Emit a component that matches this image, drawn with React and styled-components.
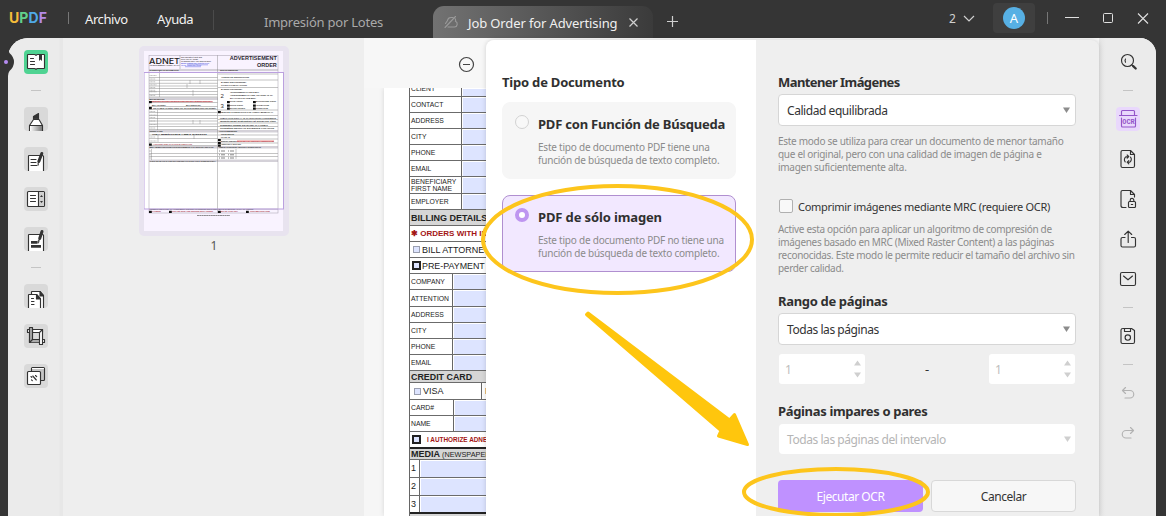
import React from 'react'
import styled, { createGlobalStyle, css } from 'styled-components'

const GlobalStyle = createGlobalStyle`
  * { box-sizing: border-box; }
  body {
    margin: 0;
    width: 1166px;
    height: 516px;
    overflow: hidden;
    background: #353535;
    font-family: "Noto Sans", sans-serif;
    color: #333;
  }
`

const Window = styled.div`
  position: relative;
  width: 1166px;
  height: 516px;
  overflow: hidden;
  background: #353535;
`

/* ---------- title bar ---------- */

const TitleBar = styled.header`
  display: flex;
  height: 38px;
  color: #f2f2f2;
`

const Brand = styled.div`
  width: 68px;
  padding-left: 9px;
  font: 700 14px/36px Inter, sans-serif;
  letter-spacing: 0.1px;
`

const Letter = styled.span`
  color: ${props => props.tint};
`

const BarDivider = styled.span`
  width: 1px;
  height: ${props => props.size || 12}px;
  margin-top: ${props => props.top || 12}px;
  background: ${props => props.tint || '#777'};
`

const MenuItem = styled.span`
  margin-left: ${props => props.gap}px;
  width: ${props => props.wide}px;
  font-size: 13px;
  line-height: 39px;
  letter-spacing: -0.4px;
  white-space: nowrap;
`

const Tab = styled.div`
  display: flex;
  align-items: center;
  height: 32px;
  margin-top: 6px;
  font-size: 13px;
  letter-spacing: ${props => props.active ? '-0.12px' : '-0.23px'};
  white-space: nowrap;
  color: ${props => props.active ? '#f0f0f0' : '#a9a9a9'};
  ${props => props.active ? css`
    width: 220px;
    padding: 0 14px 0 10px;
    border-radius: 11px 11px 0 0;
    background: linear-gradient(90deg, #727272, #3b3b3b);
  ` : css`
    width: 169px;
    margin-left: 50px;
  `}
`

const TabName = styled.span`
  width: 161px;
  margin-left: 9px;
  padding-top: 1px;
`

const PlusBox = styled.div`
  width: 296px;
  padding: 15px 0 0 13px;

  svg { display: block; }
`

const TabCount = styled.div`
  display: flex;
  align-items: center;
  gap: 7px;
  width: 44px;
  height: 37px;
  font-size: 12px;
  color: #d0d0d0;
`

const AvatarBox = styled.div`
  display: flex;
  align-items: center;
  justify-content: center;
  width: 42px;
  height: 30px;
  margin: 3px 12px 0 0;
  border-radius: 4px;
  background: #3f3f3f;
`

const Avatar = styled.span`
  width: 22px;
  height: 22px;
  border-radius: 50%;
  background: #57b0e4;
  color: #fff;
  font-size: 13px;
  line-height: 23px;
  text-align: center;
`

const WindowButtons = styled.div`
  display: flex;
  align-items: center;
  gap: 24px;
  height: 36px;
  margin-left: 17px;
`

/* ---------- body ---------- */

const Body = styled.div`
  position: relative;
  display: flex;
  width: 1148px;
  height: 478px;
  margin-left: 8px;
  border-radius: 20px 16px 0 0;
  overflow: hidden;
  background: #eee;
`

const Notch = styled.svg`
  position: absolute;
  left: 0;
  top: 38px;
`

const Rail = styled.nav`
  display: flex;
  flex-direction: column;
  align-items: ${props => props.right ? 'flex-end' : 'flex-start'};
  gap: 16px;
  width: ${props => props.right ? 57 : 55}px;
  padding: 12px 16px;
  background: ${props => props.right
    ? 'linear-gradient(90deg, #e4e4e4, #ebebeb 7px)'
    : 'linear-gradient(270deg, #e7e7e7 3px, #ebebeb 4px)'};
`

const Tile = styled.button`
  width: 24px;
  height: 24px;
  padding: 0;
  border: 0;
  border-radius: 4px;
  overflow: hidden;
  background: ${props => props.fill || 'transparent'};
  opacity: ${props => props.faded ? 0.3 : 1};

  svg { display: block; }
`

const RailDivider = styled.span`
  width: 10px;
  height: 1px;
  margin: 0 7px;
  background: #c4c4c4;
`

const Thumbnails = styled.aside`
  display: flex;
  flex-direction: column;
  align-items: center;
  width: 301px;
  padding-top: 8px;
  background: #eee;
`

const ThumbFrame = styled.div`
  width: 150px;
  height: 190px;
  padding: 5px;
  border-radius: 5px;
  background: #e8e3ef;

  svg { display: block; }
`

const PageNumber = styled.span`
  margin: 1px 0 0 1px;
  font-size: 12px;
  line-height: 17px;
  color: #555;
`

const Viewer = styled.main`
  display: flex;
  flex-direction: column;
  width: 735px;
  background: #f6f6f6;
`

const ViewerBar = styled.div`
  position: relative;
  display: flex;
  height: 50px;
  padding: 18px 0 0 94px;
  background: #f7f7f7;
`

const Sheet = styled.div`
  width: 600px;
  height: 428px;
  margin-left: 20px;
  padding-left: 25px;
  overflow: hidden;
  background: #fff;
  box-shadow: 0 0 5px rgba(0, 0, 0, 0.13);
  font-family: "Liberation Sans", sans-serif;
  color: #222;
`

const FormTable = styled.div`
  width: 200px;
  border-left: 1px solid #666;
`

const FormRow = styled.div`
  display: flex;
  align-items: center;
  height: ${props => props.tall || 16}px;
  border-bottom: ${props => props.thick ? '2px solid #222' : '1px solid #6b6b6b'};
  background: ${props => props.shaded ? '#d6d6d6' : '#fff'};
  white-space: nowrap;
`

const Label = styled.span`
  display: flex;
  align-items: center;
  width: ${props => props.wide}px;
  height: 100%;
  padding-left: 1px;
  border-right: 1px solid #666;
  font-size: ${props => props.size || 6.8}px;
  line-height: 7px;
  white-space: pre;
  ${props => props.cut && css`
    align-items: flex-start;
    line-height: 2px;
  `}
`

const FieldBox = styled.span`
  flex: 1;
  align-self: stretch;
  margin: 1px 0 0 1px;
  background: #dde4ff;
`

const RowText = styled.span`
  margin-left: ${props => props.inset ?? 1}px;
  font-size: ${props => props.size || 9}px;
  font-weight: ${props => props.bold ? 700 : 400};
  color: ${props => props.alert ? '#a31515' : '#222'};
`

const FormCheck = styled.span`
  width: ${props => props.strong ? 9 : 7}px;
  height: ${props => props.strong ? 9 : 7}px;
  margin-left: ${props => props.strong ? 2 : 3}px;
  margin-right: 2px;
  border: ${props => props.strong ? '2px solid #222' : '1px solid #9a9fb0'};
  background: #dde4ff;
`

/* ---------- OCR dialog ---------- */

const Dialog = styled.section`
  position: absolute;
  left: 486px;
  top: 40px;
  display: flex;
  width: 613px;
  height: 476px;
  border-radius: 8px 8px 0 0;
  overflow: hidden;
  background: #efefef;
  box-shadow: 0 0 5px rgba(0, 0, 0, 0.16);
`

const TypePane = styled.div`
  width: 270px;
  padding: 33px 16px 0;
  background: #fff;
`

const OptionsPane = styled.div`
  width: 343px;
  padding: 33px 23px 0 22px;
`

const Spacer = styled.div`
  height: ${props => props.large ? 17 : 9}px;
`

const Heading = styled.h3`
  margin: 0;
  font-size: 13px;
  line-height: 18px;
  font-weight: 700;
  letter-spacing: ${props => props.track || -0.2}px;
  color: #303030;
  white-space: nowrap;
`

const TypeCard = styled.label`
  display: flex;
  gap: 9px;
  width: 234px;
  height: 77px;
  margin-top: ${props => props.checked ? 16 : 11}px;
  padding: 12px 0 0 12px;
  border: 1px solid ${props => props.checked ? '#b08fd0' : '#f6f6f6'};
  border-radius: 8px;
  background: ${props => props.checked ? '#f2e8ff' : '#f6f6f6'};
`

const Radio = styled.span`
  width: 14px;
  height: 14px;
  border-radius: 50%;
  border: ${props => props.checked ? '4px solid #be95f0' : '1px solid #d2d2d2'};
  background: ${props => props.checked ? '#fff' : '#f8f8f8'};
`

const CardText = styled.div`
  display: flex;
  flex-direction: column;
  gap: 8px;
`

const Note = styled.p`
  margin: 0;
  font-size: 10px;
  line-height: 13px;
  letter-spacing: ${props => props.track || -0.29}px;
  color: #8b8b8b;
  white-space: pre;
`

const Select = styled.div`
  display: flex;
  align-items: center;
  justify-content: space-between;
  height: ${props => props.disabled ? 30 : 32}px;
  margin: ${props => props.disabled ? '4px 1px 0' : '3px 0 0'};
  padding: 0 ${props => props.disabled ? 4 : 5}px 0 8px;
  border: ${props => props.disabled ? 0 : 1}px solid #d6d6d6;
  border-radius: 4px;
  background: #fff;
  color: ${props => props.disabled ? '#b5b5b5' : '#333'};
  font-size: 12px;
  letter-spacing: -0.44px;
`

const Check = styled.div`
  display: flex;
  align-items: center;
  gap: 5px;
  height: 16px;
  margin: 24px 0 9px 1px;
  font-size: 11px;
  letter-spacing: -0.31px;
  white-space: nowrap;
`

const CheckBox = styled.span`
  width: 14px;
  height: 14px;
  border: 1px solid #b0b0b0;
  border-radius: 2px;
  background: #f8f8f8;
`

const RangeRow = styled.div`
  display: flex;
  justify-content: space-between;
  align-items: center;
  margin: 9px 1px 18px;
  font-size: 13px;
`

const Spinner = styled.div`
  display: flex;
  align-items: center;
  justify-content: space-between;
  width: 86px;
  height: 30px;
  padding: 0 4px 0 6px;
  border-radius: 3px;
  background: #fff;
  color: #bdbdbd;
  font-size: 12px;
`

const Actions = styled.div`
  display: grid;
  grid-template-columns: 1fr 1fr;
  gap: 8px;
  margin-top: 26px;
`

const Button = styled.button`
  height: 32px;
  padding: 0;
  border: ${props => props.primary ? 0 : '1px solid #d8d8d8'};
  border-radius: 4px;
  background: ${props => props.primary ? '#bf91ff' : '#f7f7f7'};
  color: ${props => props.primary ? '#fff' : '#333'};
  font: 400 12px "Noto Sans", sans-serif;
  letter-spacing: -0.45px;
`

const Marks = styled.svg`
  position: absolute;
  left: 0;
  top: 0;
  pointer-events: none;
`

/* ---------- icons ---------- */

const Icon = ({ children, fill = 'none', stroke = '#333', width = 1.15 }) => (
  <svg width="24" height="24" viewBox="0 0 24 24" fill={fill} stroke={stroke} strokeWidth={width} strokeLinecap="round" strokeLinejoin="round">
    {children}
  </svg>
)

const ReaderIcon = () => (
  <Icon fill="#fff">
    <path d="M4 4.500h6.500q1.500 0 1.500 1 0-1 1.500-1H20q.5 0 .5.5v13q0 .5-.5.5h-6.500q-1.500 0-1.500 1 0-1-1.500-1H4q-.5 0-.5-.5V5q0-.5.5-.5z" />
    <path d="M6.500 8.500h3M6.500 11.500h4M6.500 14.500h4" />
    <path d="M15 4.500h3v6.500l-1.500-1.600-1.500 1.600z" fill="#333" stroke="none" />
  </Icon>
)

const MarkerIcon = () => (
  <Icon fill="#fff">
    <defs>
      <linearGradient id="tip"><stop stopColor="#fff" /><stop offset="1" stopColor="#777" /></linearGradient>
    </defs>
    <path d="M5.500 26v-7.500l4-6h5.500l3.500 6V26z" />
    <path d="M6 19h12v6H6z" fill="url(#tip)" stroke="none" />
    <path d="M5.500 18.500h13" />
    <path d="M9.500 11.700V9.500L14.500 6.500v5.200z" fill="#333" />
  </Icon>
)

const NoteIcon = () => (
  <Icon fill="#fff">
    <path d="M4.500 26V9q0-.5.5-.5h13.500q1 0 1 1V26z" />
    <path d="M7 12.500h5M7 15.500h5M7 18.500h6" />
    <path d="M17.800 6.500l-3 8" strokeWidth="3" />
    <path d="M14.200 16.500v1.500" />
  </Icon>
)

const FormIcon = () => (
  <Icon fill="#fff">
    <rect x="3.500" y="4.500" width="17" height="15" rx="1" />
    <path d="M15 5h5v14h-5z" fill="#d0d0d0" stroke="none" />
    <path d="M14.500 4.500v15M6.500 8.500h5M6.500 11.500h5M6.500 14.500h5" />
    <path d="M16 10l1.500-2L19 10zM16 14l1.500 2L19 14z" fill="#333" stroke="none" />
  </Icon>
)

const RedactIcon = () => (
  <Icon fill="#fff">
    <path d="M4.500 26V8q0-.5.500-.5h13.500q1 0 1 1V26z" />
    <path d="M7 14h6.500v2.700H7zM7 18h10v2.700H7z" fill="#333" stroke="none" />
    <path d="M18 4.500l-2.300 7" strokeWidth="3" />
    <path d="M14.800 13.500l-.6 2" strokeWidth="1.800" stroke="#555" />
  </Icon>
)

const PagesIcon = () => (
  <Icon fill="#fff">
    <path d="M7.500 26V8q0-.5.5-.5h8l3.500 4V26z" />
    <path d="M16 7.500l3.500 4.500H16z" fill="#333" />
    <path d="M4.500 26V11q0-.5.5-.5h7.500l4 4.500V26z" />
    <path d="M12.500 10.500l4 4.500h-4z" fill="#333" />
    <path d="M7.500 14.500h2M7.500 17.500h2.500M7.500 20.500h2.500" />
  </Icon>
)

const CropIcon = () => (
  <Icon>
    <path d="M8.500 5.500h10v3h-10zM5.500 15.500h10v3h-10zM5 5.500H3.500v3H5M18.500 15.500h2v3h-2" fill="#fff" />
    <path d="M6.500 15.800h9v2.500h-9z" fill="#aaa" stroke="none" />
    <path d="M5.500 3.500h3v12l-3 3z" fill="#aaa" />
    <path d="M15.500 8.500l3-3v15h-3z" fill="#fff" />
    <path d="M8.500 15.500h7" />
  </Icon>
)

const LayersIcon = () => (
  <Icon>
    <rect x="7.500" y="3.500" width="13" height="13" rx="1" fill="#c4c4c4" />
    <path d="M8.500 4.500h11" stroke="#fff" />
    <rect x="3.500" y="7.500" width="13" height="13" rx="1" fill="#fff" />
    <path d="M7 12.500l.8.8M8.800 12l3.500 4M7.500 15.800l.8.8M11.500 11.500l1.200 1.200" />
  </Icon>
)

const SearchIcon = () => (
  <Icon>
    <circle cx="11.500" cy="10.500" r="6" />
    <path d="M9.500 9q-.9 1.500 0 3.200" />
    <path d="M15.800 14.800l1.200 1.200" />
    <path d="M17.200 16.200l2.500 2.300" strokeWidth="2.300" />
  </Icon>
)

const OcrIcon = () => (
  <Icon stroke="#9455c9">
    <path d="M5.500 8V4.500q0-1 1-1h11q1 0 1 1V8M3.500 8.500h17.500M5.500 11v8q0 1 1 1h12q1 0 1-1v-8" />
    <text x="12.500" y="17.200" textAnchor="middle" fontFamily="Liberation Mono" fontWeight="700" fontSize="6.900" fill="#9455c9" stroke="none">OCR</text>
  </Icon>
)

const ConvertIcon = () => (
  <Icon>
    <path d="M14.500 3.500h-8q-1.500 0-1.500 1.500v14q0 1.500 1.500 1.500H17q1.500 0 1.500-1.500V7.500zM14.500 3.500v4h4" />
    <path d="M9.200 14.800a3.300 3.300 0 0 1 .8-5h2.500M11.200 8l1.600 1.700-1.600 1.500M14.500 10.200a3.300 3.300 0 0 1-.8 5h-2.500M12.800 16.800l-1.600-1.600 1.600-1.500" />
  </Icon>
)

const ProtectIcon = () => (
  <Icon>
    <path d="M10 20.500H7q-2 0-2-2V5q0-1.500 1.500-1.500h8l4 4V10M14.500 3.500v4h4" />
    <rect x="12.500" y="14.500" width="7" height="6" rx="1" />
    <path d="M14.200 14.500v-1.300a1.800 1.800 0 0 1 3.600 0v1.300M15.300 17.500h1.400" />
  </Icon>
)

const ShareIcon = () => (
  <Icon>
    <path d="M9 10.500H6.500q-1.500 0-1.500 1.500v6.500q0 1.500 1.500 1.500h11.500q1.500 0 1.500-1.500V12q0-1.500-1.500-1.500H15.500M12.200 15.500V4.500M8.700 7.500l3.500-3.300 3.500 3.300" />
  </Icon>
)

const MailIcon = () => (
  <Icon>
    <rect x="4.500" y="5.500" width="15" height="13" rx="1.500" />
    <path d="M7.500 9l4.500 3.800L16.500 9" />
  </Icon>
)

const SaveIcon = () => (
  <Icon>
    <path d="M7 4.500h8.500l3 2v11.500q0 1.500-1.500 1.500H6.500q-1.500 0-1.500-1.500V6q0-1.500 2-1.500z" />
    <path d="M8.500 4.500v3h6v-3" />
    <circle cx="11.800" cy="13.500" r="2.700" />
  </Icon>
)

const UndoIcon = ({ flip }) => (
  <Icon>
    <path transform={flip ? 'matrix(-1 0 0 1 24 0)' : undefined} d="M9.500 6.500L6.500 9.500l3 3M6.500 9.500H14a3.600 3.600 0 0 1 0 7.500H9" />
  </Icon>
)

const DropArrow = ({ color = '#8c8c8c' }) => (
  <svg width="7" height="6" viewBox="0 0 7 6"><path d="M0 .5h7L3.500 6z" fill={color} /></svg>
)

const StepArrows = () => (
  <svg width="7" height="18" viewBox="0 0 7 18" fill="#cfcfcf"><path d="M0 5.500h7L3.500.5zM0 12.500h7L3.500 17.500z" /></svg>
)

/* ---------- thumbnail ---------- */

const leftLines = [77.500, 80.300, 83.300, 86, 88.500, 91.500, 94.500, 97, 102.500, 106.500, 109.500, 112.500, 115.500, 118.500, 121, 124, 126.500, 129.500, 135, 138.500, 142.500, 145.500, 153.500, 156.500]
const rightLines = [74, 80, 87.500, 110, 115.500, 119.500, 123, 126.500, 135, 139, 143, 153.500, 156.500]
const bands = [[149, 69, 129, 2], [149, 97.500, 69, 2.500], [149, 130, 129, 2.500], [149, 146, 129, 2.500], [149, 159.500, 129, 2.500], [149, 208.500, 129, 1.500]]
const smallPrint = [
  [149.5, 70.8, 'CLIENT/CONTACT INFORMATION', 29], [220, 70.8, 'SERVICE REQUESTED', 18],
  [221, 78, 'ALTERNATE INSTRUCTIONS', 28], [221, 83, 'BANNER (Non-Professional)', 25], [221, 86, 'CHARGE TO COMPANY ACCOUNT', 26],
  [221, 90, 'BANNER (Professional)', 21], [230, 93, 'ADVERTISEMENT PLACED & BILL', 29], [230, 96.2, 'ADVERTISEMENT PLACED, TRACKED AS OF:', 43], [230, 99.2, 'BUY AT THIS RATE FROM MEDIA', 26],
  [230, 102.200, 'STATE AGENCY', 13], [256, 102.200, 'BACKGROUND CHECK', 20], [230, 106, 'SKILLS CHECK', 13], [256, 106, 'AFFIDAVITS', 13], [230, 109.200, 'MAILING LISTINGS', 15], [256, 109.200, 'CONTACTS', 12],
  [149.500, 99.500, 'BILLING DETAILS', 15], [153, 109.200, 'PRE-PAYMENT (To Notary Charge Only, Will be Billed Based Upon Final Estimate)', 63], [152, 106.200, 'BILL ATTORNEY', 14], [186, 106.200, 'BILL DIRECTORY', 15],
  [221, 112.500, 'SERVICE COORDINATION (FOR AGENCY BENEFIT) ***', 52], [220, 118.800, 'PUBLICATION   DISPLAY AD   CLASS/POSTING   CONFERENCE', 56], [220, 122.300, 'Website/Target   Distribution list   Social/Org   Other', 56], [220, 125.700, 'Newspaper Sunday   DEADLINE OF FORMAT', 48], [220, 129, 'Circulation   REGULAR SCHEDULE   LOCATION', 54],
  [149.500, 132, 'CREDIT CARD', 13], [219, 132, 'ACTION REQUESTED', 18], [221, 134.700, 'PRICE QUOTE', 13], [152, 134.500, 'VISA   MasterCard   AMEX   Discover', 55], [221, 138.300, 'PLACE AD', 9], [221, 142, 'BINDING REQUEST', 16], [221, 145.200, 'ADDITIONAL TEXT SET', 20],
  [149.500, 148.300, 'MEDIA (NEWSPAPER/JOURNALS/LISTINGS/WEBSITE) (FOR ADDITIONAL SEE PAGE)', 64], [219, 148.300, 'PUBLISH DATES/ISSUE   ADDITIONAL NOTES/CONTACT', 42],
  [149.500, 161.800, 'AD TEXT (PLEASE TYPE OR PASTE TEXT, FORMATTED AS IT SHOULD APPEAR OR SEND SEPARATELY)', 66], [149.500, 210.200, 'TERMS/CONDITIONS OF AGREEMENT (UNLESS OTHERWISE INDICATED ABOVE IN WRITING APPLY TO ORDER)', 104]
]
const redPrint = [[150, 102.200, 'ORDERS WITH INVOICES AND MULTIPLE BILLINGS WILL REQUIRE ADDITIONAL', 62], [153, 145.300, 'I AUTHORIZE ADNET TO CHARGE MY CREDIT CARD', 39], [237, 141.700, 'DEADLINE FOR ADDITIONAL INSTRUCTIONS', 37], [152, 212.300, 'PAYMENT', 9], [172, 212.300, 'PLEASE SIGN AND RETURN WITH ORDER', 41], [221, 212.300, 'BILL MY CARD ONLY', 17], [250, 212.300, 'CUSTOMER SIGNATURE', 20]]
const blackBoxes = [[227, 101], [227, 104.500], [227, 107.500], [253, 101], [253, 104.500], [253, 107.500], [149, 101], [149, 107], [218, 111], [149, 143.500], [218, 139], [218, 142], [218, 144.500], [149, 210.800], [169, 210.800], [218, 210.800], [246, 210.800]]
const rowLabels = [75.500, 79, 81.800, 84.800, 87.500, 90.300, 91.800, 95.500, 111.500, 115, 117.500, 121, 124.500, 128, 137, 141]

const PageThumb = () => (
  <svg width="140" height="180" viewBox="144 51 140 180" fontFamily="Liberation Sans">
    <rect x="144" y="51" width="139" height="180" fill="#f9f3ff" />
    <rect x="144" y="72" width="139.500" height="137" fill="#fff" />
    {bands.map(([x, y, w, h]) => <rect key={y} x={x} y={y} width={w} height={h} fill="#d4d1d8" />)}
    <path d={leftLines.map(y => `M149 ${y}h68.500`).join('') + rightLines.map(y => `M218 ${y}h60`).join('')} stroke="#555" strokeWidth=".35" />
    <path d="M159.500 71v26M157.500 110v20M151.500 149v11M236 149v10M190 80v4M200 80v4M187 84v4M193 90v6M193 120v4M200 120v4M158 135v7M194 135v4M180 55v14M217.500 55v158" stroke="#777" strokeWidth=".4" />
    <rect x="149" y="55.500" width="129" height="157.500" fill="none" stroke="#a39dab" strokeWidth=".5" />
    <text x="149" y="63.800" fontSize="8" fontFamily="Inter" fontWeight="500" fill="#222" textLength="31" lengthAdjust="spacingAndGlyphs">ADNET</text>
    <text x="149.500" y="65.800" fontSize="1.700" fontWeight="700" fill="#333" textLength="30">ADVERTISEMENT AGENCY & ALL</text>
    <g fontSize="2.200" fill="#333">
      <text x="181" y="58.200" textLength="21">271 Main Street, Suite 203</text>
      <text x="181" y="60.400" textLength="17">New York, NY 10038</text>
      <text x="181" y="62.400" textLength="30">Tel 212-587-5164, Fax 212-693-2660</text>
      <text x="181" y="64.400" textLength="28" fill="#2a36d8">Email: classifieds@adnetny.com</text>
      <text x="181" y="66.400" textLength="20" fill="#2a36d8">Web: adnetny.com</text>
    </g>
    <path d="M187 64.800h21M185 66.700h16" stroke="#3440e0" strokeWidth=".4" />
    <text x="276.800" y="60.300" textAnchor="end" fontSize="5.500" fontWeight="700" fill="#2c2733">ADVERTISEMENT</text>
    <text x="276.800" y="67.200" textAnchor="end" fontSize="5.500" fontWeight="700" fill="#2c2733">ORDER</text>
    <g fontSize="2.300" fontWeight="700" fill="#111">
      {smallPrint.map(([x, y, t, w]) => <text key={t + x} x={x} y={y} textLength={w} lengthAdjust="spacingAndGlyphs">{t}</text>)}
    </g>
    <path d="M149 101h64v1.200h-64zM237 140.200h37v1.800h-37z" fill="#e86a6a" opacity=".5" />
    <g fontSize="2.300" fontWeight="700" fill="#a52a35">
      {redPrint.map(([x, y, t, w]) => <text key={t} x={x} y={y} textLength={w} lengthAdjust="spacingAndGlyphs">{t}</text>)}
    </g>
    {rowLabels.map((y, i) => <path key={y} d={`M149.500 ${y}h${i % 3 ? 6 : 7}`} stroke="#888" strokeWidth=".5" strokeDasharray="1.200 .3" />)}
    {[151, 154.800, 158].map(y => <path key={y} d={`M149.500 ${y}h1M219 ${y}h1M221 ${y}h4M228 ${y}h1M230 ${y}h4`} stroke="#666" strokeWidth=".8" />)}
    <text x="220.500" y="97.500" fontSize="6" fill="#333">2</text>
    <text x="220.500" y="107.500" fontSize="6" fill="#333">3</text>
    {blackBoxes.map(([x, y]) => <rect key={x + '-' + y} x={x} y={y} width="2.800" height="2.200" fill="#111" />)}
    <path d="M197 215.500h33" stroke="#444" strokeWidth=".6" strokeDasharray="2 .3" />
    <rect x="144" y="72.500" width="139.500" height="136.500" fill="none" stroke="#bba0df" />
  </svg>
)

const firstFields = ['CONTACT', 'ADDRESS', 'CITY', 'PHONE', 'EMAIL', 'BENEFICIARY\nFIRST NAME', 'EMPLOYER']
const billingFields = ['COMPANY', 'ATTENTION', 'ADDRESS', 'CITY', 'PHONE', 'EMAIL']

const OrderForm = () => (
  <FormTable>
    <FormRow tall={9}><Label wide={52} cut>CLIENT</Label><FieldBox /></FormRow>
    {firstFields.map(name => (
      <FormRow key={name} tall={name.startsWith('BENE') ? 17 : 16}><Label wide={52}>{name}</Label><FieldBox /></FormRow>
    ))}
    <FormRow shaded><RowText bold>BILLING DETAILS</RowText></FormRow>
    <FormRow><RowText bold alert size={8}>✱ ORDERS WITH INVOICES</RowText></FormRow>
    <FormRow><FormCheck /><RowText inset={0} size={9}>BILL ATTORNEY</RowText></FormRow>
    <FormRow><FormCheck strong /><RowText inset={-1} size={8.9}>PRE-PAYMENT</RowText></FormRow>
    {billingFields.map((name, i) => (
      <FormRow key={name} tall={i === 1 ? 17 : 16}><Label wide={43}>{name}</Label><FieldBox /></FormRow>
    ))}
    <FormRow tall={12} shaded><RowText bold size={8.9}>CREDIT CARD</RowText></FormRow>
    <FormRow tall={17}><Label wide={72} size={9}><FormCheck />VISA</Label><RowText inset={3} size={9}>MasterCard</RowText></FormRow>
    <FormRow><Label wide={44}>CARD#</Label><FieldBox /></FormRow>
    <FormRow><Label wide={44}>NAME</Label><FieldBox /></FormRow>
    <FormRow tall={17} thick><FormCheck strong /><RowText bold alert inset={4} size={6.400}>I AUTHORIZE ADNET TO CHARGE</RowText></FormRow>
    <FormRow tall={11} shaded><RowText bold>MEDIA</RowText><RowText inset={2} size={7.300}>(NEWSPAPERS)</RowText></FormRow>
    {['1', '2', '3'].map(n => (
      <FormRow key={n} tall={18} thick={n === '3'}><Label wide={10} size={9}>{n}</Label><FieldBox /></FormRow>
    ))}
    <FormRow shaded />
  </FormTable>
)

export default function App() {
  return (
    <Window>
      <GlobalStyle />
      <TitleBar>
        <Brand>
          <Letter tint="#f5bd3a">U</Letter><Letter tint="#62d08b">P</Letter><Letter tint="#4fa9e6">D</Letter><Letter tint="#b48ae8">F</Letter>
        </Brand>
        <BarDivider />
        <MenuItem gap={16} wide={72}>Archivo</MenuItem>
        <MenuItem gap={0} wide={56}>Ayuda</MenuItem>
        <BarDivider size={20} top={10} tint="#4b4b4b" />
        <Tab>Impresión por Lotes</Tab>
        <Tab active>
          <svg width="16" height="14" viewBox="0 0 16 14" fill="none" stroke="#9a9a9a" strokeWidth="1.100" strokeLinecap="round">
            <path d="M2 12.500L12.500 1.500M10 2.500H8Q5 2.500 4.500 5.500L2.500 8.500M5 12h6.500a3 3 0 0 0 1-5.700q.5-1.300-.3-2.500" />
          </svg>
          <TabName>Job Order for Advertising</TabName>
          <svg width="9" height="9" viewBox="0 0 9 9" stroke="#d0d0d0" strokeWidth="1.200"><path d="M.5.5l8 8M8.500.5l-8 8" /></svg>
        </Tab>
        <PlusBox>
          <svg width="13" height="13" viewBox="0 0 13 13" stroke="#d0d0d0" strokeWidth="1.200"><path d="M1 6.500h11M6.500 1v11" /></svg>
        </PlusBox>
        <TabCount>
          2
          <svg width="12" height="8" viewBox="0 0 12 8" fill="none" stroke="#d0d0d0" strokeWidth="1.200"><path d="M1 1l5 5 5-5" /></svg>
        </TabCount>
        <AvatarBox><Avatar>A</Avatar></AvatarBox>
        <BarDivider />
        <WindowButtons>
          <svg width="14" height="12" stroke="#e0e0e0"><path d="M0 5.500h14" /></svg>
          <svg width="10" height="10" fill="none" stroke="#e0e0e0"><rect x=".5" y=".5" width="9" height="9" rx="1" /></svg>
          <svg width="12" height="11" stroke="#e0e0e0" strokeWidth="1.100"><path d="M1 .5l10 10M11 .5l-10 10" /></svg>
        </WindowButtons>
      </TitleBar>
      <Body>
        <Rail>
          <Tile fill="#4fd392"><ReaderIcon /></Tile>
          <RailDivider />
          <Tile fill="#d9d9d9"><MarkerIcon /></Tile>
          <Tile fill="#d9d9d9"><NoteIcon /></Tile>
          <Tile fill="#d9d9d9"><FormIcon /></Tile>
          <Tile fill="#d9d9d9"><RedactIcon /></Tile>
          <RailDivider />
          <Tile fill="#d9d9d9"><PagesIcon /></Tile>
          <Tile fill="#d9d9d9"><CropIcon /></Tile>
          <Tile fill="#d9d9d9"><LayersIcon /></Tile>
        </Rail>
        <Thumbnails>
          <ThumbFrame><PageThumb /></ThumbFrame>
          <PageNumber>1</PageNumber>
        </Thumbnails>
        <Viewer>
          <ViewerBar>
            <svg width="17" height="17" fill="none" stroke="#444" strokeWidth="1.200"><circle cx="8.500" cy="8.500" r="7" /><path d="M5 8.500h7" /></svg>
          </ViewerBar>
          <Sheet><OrderForm /></Sheet>
        </Viewer>
        <Rail right>
          <Tile><SearchIcon /></Tile>
          <RailDivider />
          <Tile fill="#e9d8fc"><OcrIcon /></Tile>
          <Tile><ConvertIcon /></Tile>
          <Tile><ProtectIcon /></Tile>
          <Tile><ShareIcon /></Tile>
          <Tile><MailIcon /></Tile>
          <RailDivider />
          <Tile><SaveIcon /></Tile>
          <RailDivider />
          <Tile faded><UndoIcon /></Tile>
          <Tile faded><UndoIcon flip /></Tile>
        </Rail>
      </Body>
      <Notch width="16" height="50" viewBox="0 38 16 50">
        <path d="M0 46h10Q7 49 9.500 53 14 57 14 62t-4.500 9Q8 73 8 76v10H0z" fill="#353535" />
        <circle cx="6" cy="62" r="2" fill="#b68cf2" />
      </Notch>
      <Dialog>
        <TypePane>
          <Heading>Tipo de Documento</Heading>
          <TypeCard>
            <Radio />
            <CardText>
              <Heading track={-0.21}>PDF con Función de Búsqueda</Heading>
              <Note track={-0.22}>{'Este tipo de documento PDF tiene una\nfunción de búsqueda de texto completo.'}</Note>
            </CardText>
          </TypeCard>
          <TypeCard checked>
            <Radio checked />
            <CardText>
              <Heading track={-0.13}>PDF de sólo imagen</Heading>
              <Note track={-0.22}>{'Este tipo de documento PDF no tiene una\nfunción de búsqueda de texto completo.'}</Note>
            </CardText>
          </TypeCard>
        </TypePane>
        <OptionsPane>
          <Heading track={-0.58}>Mantener Imágenes</Heading>
          <Select><span>Calidad equilibrada</span><DropArrow /></Select>
          <Spacer />
          <Note>{'Este modo se utiliza para crear un documento de menor tamaño\nque el original, pero con una calidad de imagen de página e\nimagen suficientemente alta.'}</Note>
          <Check><CheckBox />Comprimir imágenes mediante MRC (requiere OCR)</Check>
          <Note track={-0.32}>{'Active esta opción para aplicar un algoritmo de compresión de\nimágenes basado en MRC (Mixed Raster Content) a las páginas\nreconocidas. Este modo le permite reducir el tamaño del archivo sin\nperder calidad.'}</Note>
          <Spacer large />
          <Heading track={-0.33}>Rango de páginas</Heading>
          <Select><span>Todas las páginas</span><DropArrow /></Select>
          <RangeRow>
            <Spinner>1<StepArrows /></Spinner>
            <span>-</span>
            <Spinner>1<StepArrows /></Spinner>
          </RangeRow>
          <Heading track={-0.34}>Páginas impares o pares</Heading>
          <Select disabled><span>Todas las páginas del intervalo</span><DropArrow color="#cfcfcf" /></Select>
          <Actions>
            <Button primary>Ejecutar OCR</Button>
            <Button>Cancelar</Button>
          </Actions>
        </OptionsPane>
      </Dialog>
      <Marks width="1166" height="516" fill="none" stroke="#fdc51c" strokeWidth="4">
        <ellipse cx="617.500" cy="239.500" rx="134.500" ry="53.500" />
        <ellipse cx="836" cy="492" rx="92" ry="23" />
        <path d="M588 313l141.500 107 5-5.500 13 30-29-8.500 2.500-5.500L586.500 314.500z" fill="#ffc60d" stroke="#ffc60d" strokeWidth="3" strokeLinejoin="round" />
      </Marks>
    </Window>
  )
}
